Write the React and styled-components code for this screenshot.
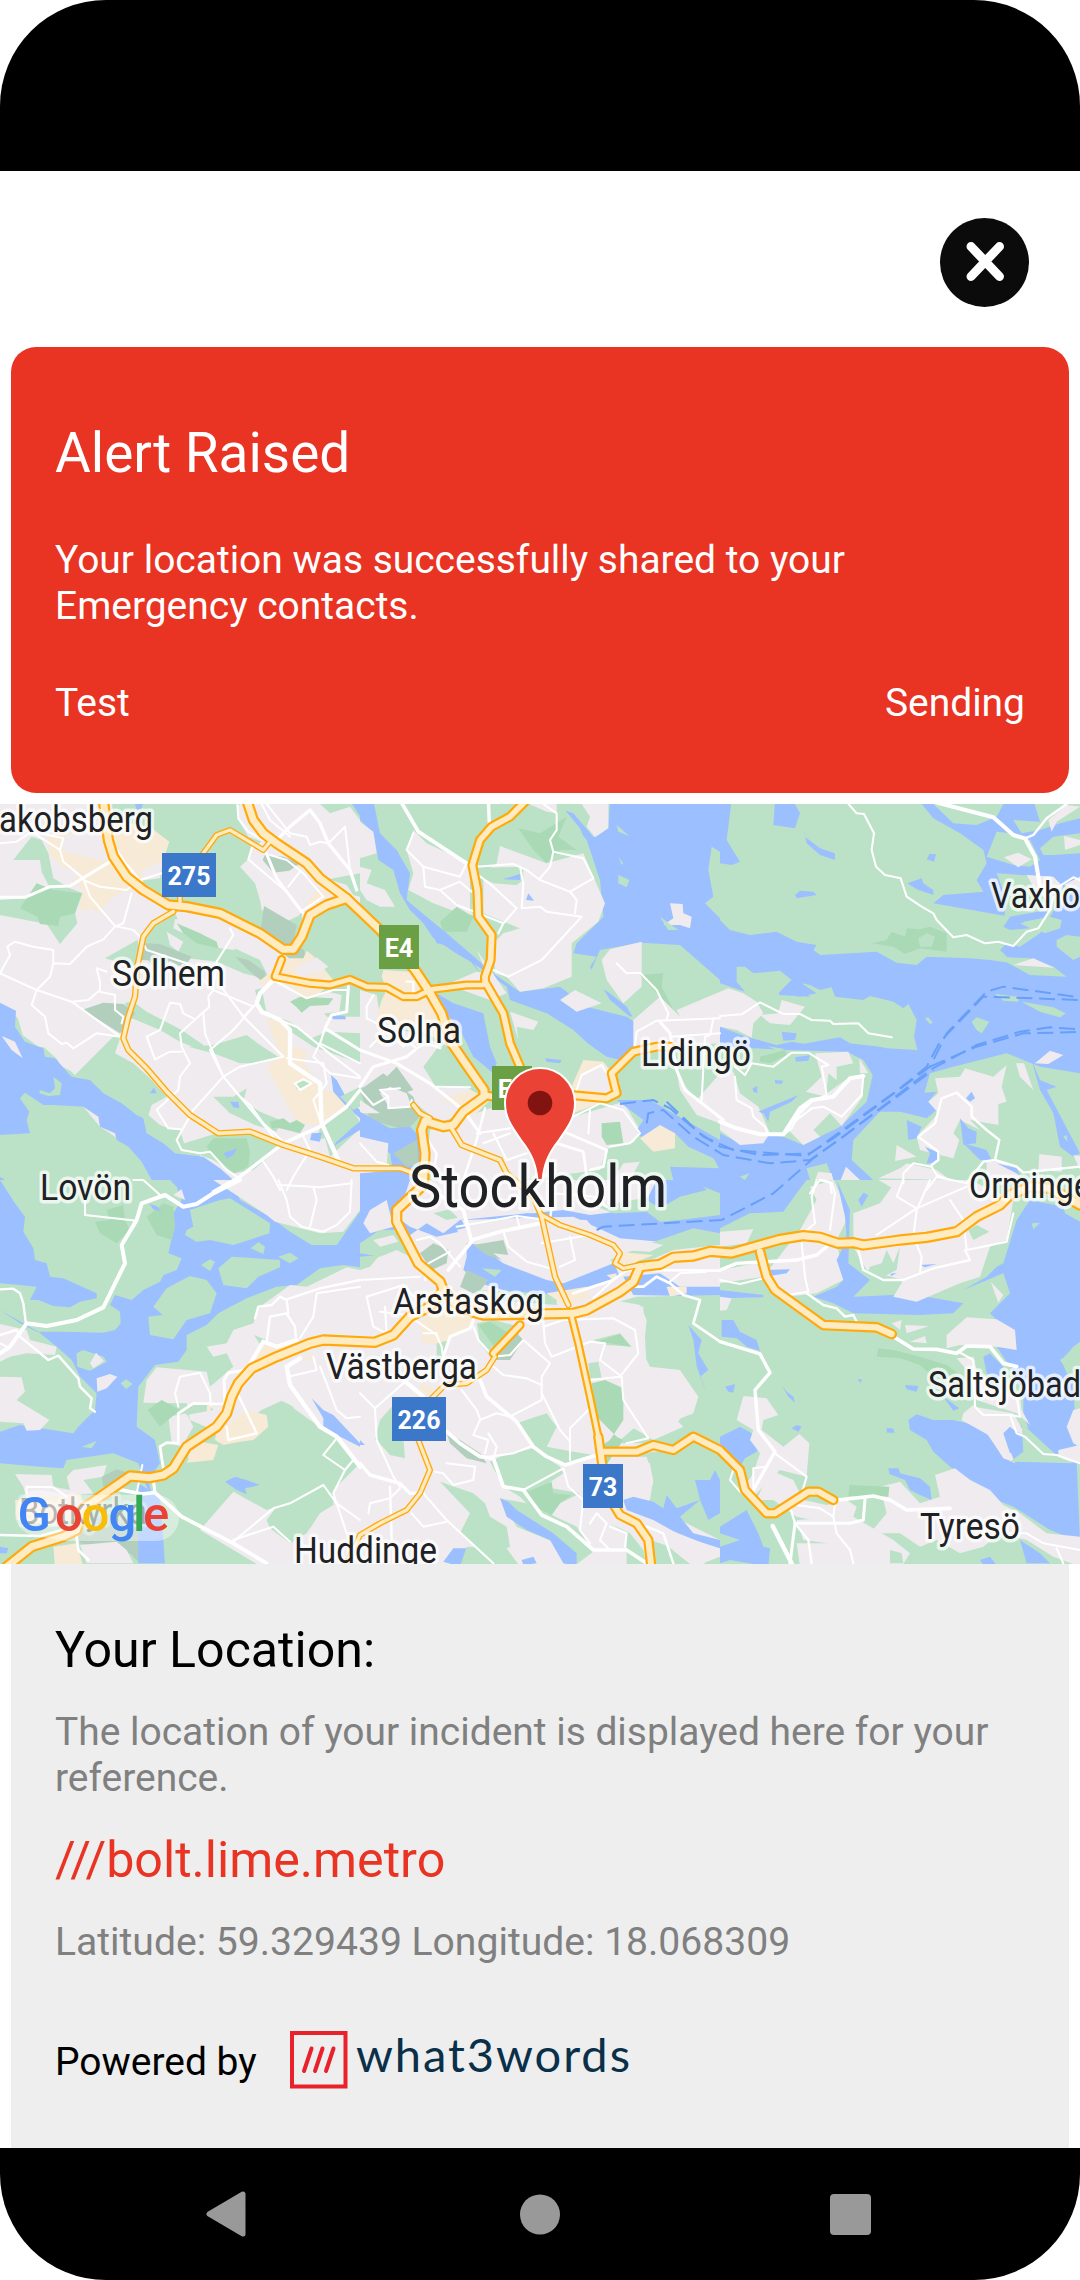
import React from 'react';
import styled, { createGlobalStyle } from 'styled-components';

const GlobalStyle = createGlobalStyle`
  * { box-sizing: border-box; }
  body { margin: 0; background: #fff; font-family: Roboto, "Noto Sans", sans-serif; }
`;

const Screen = styled.main`
  display: flex;
  flex-direction: column;
  width: 1080px;
  height: 2280px;
  overflow: hidden;
  border-radius: 106px;
  background: #fff;
`;
const StatusBar = styled.div`
  height: 171px;
  flex: none;
  background: #000;
`;
const Header = styled.header`
  display: flex;
  justify-content: flex-end;
  height: 176px;
  flex: none;
  padding: 47px 51px 0 0;
`;
const CloseButton = styled.button`
  width: 89px;
  height: 89px;
  padding: 0;
  border: 0;
  border-radius: 50%;
  background: #0b0b0b;
  svg { display: block; }
`;
const AlertCard = styled.section`
  height: 446px;
  flex: none;
  margin: 0 11px 11px;
  padding: 74px 44px 0;
  border-radius: 25px;
  background: #e93323;
  color: #fff;
`;
const Text = styled.p`
  margin: ${(p) => p.$top || 0}px 0 0;
  font-size: ${(p) => p.$size || 38.95}px;
  line-height: ${(p) => p.$line || 46}px;
  font-weight: 400;
  color: ${(p) => p.$color || 'inherit'};
`;
const StatusRow = styled.div`
  display: flex;
  justify-content: space-between;
  margin-top: 51px;
`;
const MapSvg = styled.svg`
  display: block;
  flex: none;
  width: 1080px;
  height: 760px;
`;
const MapLabel = styled.text`
  font: 400 ${(p) => p.$size || 36}px Roboto, sans-serif;
  fill: #202124;
  stroke: rgba(255, 255, 255, 0.72);
  stroke-width: 7px;
  stroke-linejoin: round;
  paint-order: stroke;
`;
const ShieldText = styled.text`
  font: 700 26px Roboto, sans-serif;
  fill: #fff;
  text-anchor: middle;
`;
const GoogleText = styled.text`
  font: 500 49px Roboto, sans-serif;
`;
const LocationPanel = styled.section`
  flex: 1;
  margin: 0 11px;
  padding: 57px 44px 0;
  background: #eee;
`;
const PoweredRow = styled.div`
  display: flex;
  align-items: flex-start;
  gap: 33px;
  margin-top: 66px;
`;
const BrandText = styled.text`
  font: 400 47px Lato, sans-serif;
  fill: #0a3049;
`;
const NavBar = styled.nav`
  display: flex;
  align-items: center;
  justify-content: space-between;
  height: 132px;
  flex: none;
  padding: 0 209px 0 206px;
  background: #000;
`;

const G = '#bbe2c6';
const W = '#9cc0ff';
const U = '#efebef';
const D = '#a9dab5';
const B = '#f7ead6';
const K = '#b2cebd';

/* Terrain sheets: three columns by two rows, 3 units per pixel. */
const SHEETS = [
  {
    x: 0, y: 0, base: U,
    shapes: [
      [G, '335,0 735,0 712,20 712,55 745,110 785,125 752,145 745,178 720,200 765,250 780,300 785,330 850,360 905,340 915,480 850,460 780,405 660,350 520,330 440,285 395,245 480,235 490,180 505,125 440,90 345,95'],
      [G, '0,345 0,300 75,295 150,265 125,215 120,180 40,180 75,135 95,110 125,120 145,160 160,235 210,265 248,280 225,340 232,370 180,432 140,372'],
      [D, '60,325 110,250 160,270 245,280 225,340 180,350 175,378 120,372 112,350'],
      [U, '735,190 800,225 835,260 880,330 900,345 850,370 800,320 780,300 772,250'],
      [U, '800,0 1080,0 1080,320 1000,280 970,200 880,120'],
      [G, '900,12 960,12 990,40 1050,20 1080,60 1080,0 900,0'],
      [W, '1048,0 1080,0 1080,48'],
      [W, '405,12 428,12 425,28 410,28'],
      [G, '985,238 1080,220 1080,290 1060,285 1040,255'],
      [K, '795,165 850,170 900,190 868,212 820,218 788,180'],
      [G, '910,365 960,335 1040,300 1080,345 1080,530 1000,545 935,540 910,500 880,460'],
      [K, '792,318 850,352 890,375 880,430 912,450 918,475 880,485 780,405'],
      [B, '345,60 455,85 508,125 490,180 425,212 430,245 380,272 340,290 320,310 290,345 285,328 235,330 250,270 215,240 245,225 185,200 150,165 140,110 180,95 300,90'],
      [U, '180,115 215,100 300,95 330,185 230,165 190,150'],
      [B, '955,265 980,255 990,285 940,312 910,320'],
      [G, '315,475 412,420 420,455 405,500'],
      [G, '420,425 480,350 520,330 535,360 650,420 715,450 780,480 810,540 730,520 650,485 530,470 470,510 430,465'],
      [U, '525,358 650,350 700,385 705,450 660,445 590,420 520,385'],
      [U, '500,395 550,425 535,455 510,435'],
      [K, '430,430 480,432 575,470 550,505 510,482 415,480'],
      [D, '530,370 600,400 650,425 655,445 590,430 550,400'],
      [K, '705,470 745,480 795,515 800,555 745,510'],
      [G, '860,480 1080,520 1080,650 980,650 940,590 830,535'],
      [B, '855,475 910,475 920,452 940,468 1000,540 940,600 900,590 850,535 795,560 775,545 820,510'],
      [U, '885,505 950,472 985,500 960,515 900,530'],
      [U, '870,570 930,600 985,575 1025,585 1018,635 980,640 900,635 850,600'],
      [D, '870,605 900,590 1000,595 985,615 930,618 905,638 890,622'],
      [G, '765,570 785,565 800,640 870,665 935,715 980,695 1080,700 1080,790 940,740 820,660 785,640'],
      [W, '990,645 1035,648 1038,658 1000,658'],
      [W, '945,750 970,775 965,770'],
      [G, '375,608 400,605 440,635 545,690 610,735 610,752 540,725 480,690 385,650'],
      [K, '245,630 310,608 370,612 405,640 380,680 360,700 265,640'],
      [G, '225,825 350,700 360,715 345,760 400,790 455,840 500,890 455,915 445,945 480,975 505,985 540,990 555,1040 600,1060 600,1075 490,1060 420,1005 390,945 300,875'],
      [G, '565,740 640,735 740,705 780,735 835,770 775,790 720,790 640,760'],
      [G, '640,890 700,890 740,865 730,905 780,935 840,960 830,995 765,975 690,940'],
      [B, '800,655 850,665 880,740 925,755 910,785 970,870 1010,880 1045,910 1040,930 940,978 895,965 870,930 800,800 820,780 840,770'],
      [G, '905,840 935,850 915,860 890,868 885,850'],
      [W, '993,825 1010,840 1040,895 1080,930 1080,955 1040,920 1000,875'],
      [G, '1020,890 1080,860 1080,920 1060,930'],
      [G, '505,1045 650,1000 750,1003 860,1035 830,1050 760,1110 700,1120 640,1080 560,1050'],
      [D, '640,1015 740,1015 750,1055 745,1100 705,1120 640,1070 620,1040'],
      [D, '810,965 850,955 870,970 890,960 915,975 900,1000 840,985 815,985'],
      [W, '670,1060 712,1045 700,1065 680,1075'],
      [W, '690,905 715,905 718,925 700,922'],
      [W, '450,880 462,862 470,880'],
      [G, '960,985 1050,920 1080,965 1075,990 990,1070 975,1015 950,1020'],
      [W, '935,1000 965,998 960,1025 930,1020'],
      [W, '1010,1025 1060,980 1080,965 1080,990 1030,1020 1000,1040'],
      [G, '40,640 135,745 225,825 300,880 200,860 100,780 45,710'],
      [U, '48,635 170,740 210,800 230,820 180,798 160,745 115,740 68,705'],
      [G, '0,1000 70,860 160,905 250,920 300,980 390,1040 425,1080 470,1140 0,1140'],
      [W, '0,608 48,632 45,680 75,725 130,745 135,770 165,775 215,830 270,840 310,880 365,910 410,945 430,955 440,1000 490,1030 525,1060 610,1070 660,1105 700,1140 455,1140 425,1085 385,1040 350,1020 345,1000 300,980 295,950 250,920 160,915 130,915 75,878 60,895 88,935 80,960 90,1000 0,1005'],
      [G, '120,870 150,880 165,865 160,830 185,850 180,885 145,888 118,880'],
      [U, '5,708 45,725 68,775 35,750'],
      [W, '0,1130 30,1150 0,1150'],
    ],
  },
  {
    x: 1080, y: 0, base: G,
    shapes: [
      [W, '0,0 40,0 60,100 110,150 150,220 140,300 200,350 260,400 330,460 400,520 480,575 600,560 680,620 800,650 830,670 900,740 780,780 740,770 640,700 560,640 450,600 440,560 340,490 270,450 230,430 190,370 150,330 120,280 100,210 55,180 40,100 0,60'],
      [W, '750,0 1080,0 1080,680 980,600 810,650 750,600 690,500 710,470 640,460 650,430 730,350 720,240 680,120 620,50 610,30 640,40 700,110 745,80'],
      [G, '140,0 480,0 600,12 660,85 690,160 700,250 730,310 715,360 640,430 610,540 480,575 400,520 340,380 170,110'],
      [U, '420,138 560,190 670,160 700,230 735,310 715,365 635,430 635,530 550,565 480,575 440,530 405,520 400,430 430,400 480,385 370,340 370,220 410,190'],
      [U, '140,150 160,90 200,130 330,190 330,330 340,345 300,340 220,310 145,270 160,220'],
      [U, '0,65 40,95 50,160 0,175'],
      [U, '0,200 35,210 20,250 75,270 105,320 60,320 20,300 0,270'],
      [G, '335,205 490,200 490,240 470,255 400,250 360,230'],
      [W, '428,238 480,222 480,240'], [W, '498,300 505,280 522,302'],
      [U, '480,0 590,0 590,40 560,35'],
      [D, '475,85 540,100 620,50 595,110 650,150 600,150 560,190 520,150'],
      [D, '240,365 290,320 340,350 320,395 250,395'],
      [U, '350,450 440,580 390,600 280,560 275,505 380,520'],
      [U, '665,12 745,12 745,85 705,112 680,80 690,50'],
      [G, '770,75 808,108 775,95'], [G, '775,225 808,240 800,262 775,250'], [G, '775,170 790,190 785,195'],
      [G, '1055,140 1080,155 1080,355 1035,310 1060,290 1045,210'],
      [U, '930,310 968,312 970,340 995,350 990,385 960,375 910,375 940,355'],
      [G, '900,350 955,390 925,390'],
      [G, '690,520 720,450 840,428 960,435 1080,540 1080,700 960,700 830,670 800,620 750,580 710,555'],
      [U, '725,480 750,448 845,425 845,560 790,610 740,540'],
      [D, '840,525 910,520 905,560 940,630 900,590'],
      [U, '820,660 900,590 940,630 960,650 950,630 1080,575 1080,970 1010,945 960,870 940,760 820,750 820,700'],
      [G, '935,740 1080,730 1080,820 1010,900 960,840 940,790'],
      [U, '600,600 645,570 725,610 650,635'],
      [G, '390,600 450,630 560,640 640,690 715,760 700,800 640,790 550,820 490,800 440,690'],
      [U, '450,635 535,665 520,690 470,680 475,720'],
      [G, '505,760 525,700 560,720 540,800'],
      [W, '555,775 605,780 600,790 560,785'],
      [G, '0,310 110,350 230,420 360,510 280,545 240,620 360,870 260,870 150,780 0,740'],
      [W, '195,350 230,430 300,445 360,520 330,470 260,400'],
      [W, '230,580 280,610 370,640 390,740 410,790 400,820 340,770 300,690 250,630'],
      [U, '0,570 50,585 60,650 130,690 240,730 300,850 350,880 330,930 240,970 130,880 0,860'],
      [B, '70,510 150,515 230,600 260,700 240,720 150,680 50,650 65,600 80,570 65,530'],
      [G, '235,740 285,760 370,860 230,865 190,800'],
      [K, '0,870 70,820 160,890 180,950 140,990 30,960'],
      [K, '80,830 110,800 160,870 130,880'],
      [U, '60,880 90,860 140,880 155,920 90,925'],
      [B, '240,900 330,870 390,900 320,970 270,970 320,920'],
      [U, '0,900 60,940 0,940'],
      [W, '0,935 90,985 150,980 180,1010 180,1100 100,1120 90,1060 0,1010'],
      [U, '0,1010 85,1030 80,1100 0,1130'],
      [U, '210,990 390,925 640,950 790,905 840,990 820,1030 740,1040 720,1110 480,1140 250,1140 200,1080'],
      [U, '300,980 380,935 640,1000 830,990 740,1050 710,1110 250,1120'],
      [B, '630,870 670,780 730,785 780,850 760,895 690,920 640,940'],
      [U, '650,865 665,820 720,795 740,800 745,880'],
      [D, '725,970 780,965 790,1030 740,1035 725,1010'],
      [G, '750,1040 860,1020 960,1050 1080,1100 1080,1140 710,1140'],
      [W, '770,900 870,900 1080,1020 1080,1110 990,1080 940,1060 930,1000 840,1010 830,990 850,960'],
      [G, '945,1000 985,1040 1060,1075 1080,1110 960,1100 900,1050'],
      [B, '840,1015 900,975 945,1000 945,1045 880,1055'],
      [K, '100,1060 170,1020 175,1095 140,1100'],
      [W, '0,1120 140,1110 170,1140 0,1140'],
      [W, '930,1100 1080,1105 1080,1140 940,1140'],
      [U, '790,1090 840,1085 810,1140 760,1140'],
    ],
  },
  {
    x: 2160, y: 0, base: W,
    shapes: [
      [G, '35,0 165,0 160,75 225,85 240,40 225,12 605,12 640,55 720,100 790,150 800,190 770,240 790,275 670,285 640,310 870,350 850,380 910,395 870,420 840,450 880,490 810,480 750,475 620,470 590,495 530,488 470,455 300,465 280,450 290,435 230,425 170,395 90,405 30,390 0,360 0,190 35,195 60,185 20,120'],
      [W, '250,82 255,110 300,145 345,160 345,180 300,165 260,130'],
      [W, '225,285 240,272 280,275 290,285 230,295'], [W, '620,178 628,162 648,162 642,185'],
      [W, '562,250 605,235 610,250 640,270 640,285 590,268'],
      [D, '455,430 500,420 515,395 555,410 560,385 600,388 630,380 680,400 680,455 640,450 600,445 555,462 520,440'],
      [G, '595,415 620,400 645,410 635,440 600,440'],
      [G, '640,12 850,12 830,50 770,75 700,70'],
      [G, '800,170 830,95 870,100 930,120 960,180 930,200 880,195'],
      [G, '960,145 1000,110 1080,100 1080,160 1000,165 970,165'],
      [G, '940,0 1080,0 1080,55 1020,70 960,90 905,100 880,60 960,65'],
      [U, '852,172 895,158 935,178 895,202'], [U, '985,60 1040,15 1080,20 1010,65 995,95'], [U, '1032,108 1080,120 1080,135 1035,150'],
      [G, '830,220 900,225 1000,230 1030,265 1080,230 1080,260 1020,300 960,400 900,440 820,420 850,370 860,300'],
      [U, '920,225 1000,230 1030,260 980,300 940,260'], [U, '1030,255 1080,230 1080,270'],
      [W, '850,380 870,350 985,330 970,355 900,370 930,385 870,390'],
      [G, '910,365 990,350 1025,360 1020,385 975,400 930,380'],
      [G, '1010,420 1040,405 1080,410 1080,470 1060,480 1010,440'],
      [G, '830,470 930,475 1000,500 1040,530 930,525'],
      [U, '880,495 940,475 1003,503'],
      [G, '50,500 75,500 100,520 180,512 215,540 175,580 240,590 290,580 245,550 270,555 300,570 335,562 345,590 430,600 450,588 520,605 550,625 565,612 590,660 582,710 592,750 500,745 480,740 390,730 360,712 200,740 180,755 100,720 0,690 0,550 75,575 50,545'],
      [W, '215,540 270,590 175,585'],
      [U, '0,575 25,565 70,580 110,605 130,640 100,670 95,713 50,690 0,680'], [U, '120,645 175,640 185,600 255,620 210,675 150,670'],
      [W, '185,695 230,700 225,720 190,722'], [G, '615,655 625,652 638,668 630,672'],
      [G, '755,665 770,652 808,665 785,700 770,690'], [G, '825,582 895,590 895,605 850,602'], [G, '905,605 1000,622 1037,640 1020,652 960,635'],
      [W, '0,680 80,710 170,735 215,725 330,745 290,760 180,745 60,725 0,700'],
      [G, '0,740 200,750 380,755 430,780 458,825 440,905 360,980 250,1035 190,1010 140,1005 60,1030 0,1000'],
      [U, '0,800 40,815 60,880 115,920 150,1000 130,1030 60,1035 0,990'],
      [D, '120,770 195,750 200,765 150,790 120,785'], [W, '225,772 270,766 265,782 228,785'],
      [W, '98,865 112,858 112,880 100,875'], [W, '165,840 190,842 185,852 165,850'],
      [W, '115,935 150,920 235,885 215,905 150,935 145,965 130,940'],
      [U, '285,760 385,755 400,790 350,800 350,840 325,820 318,890 258,875 305,830'],
      [U, '418,775 445,820 420,820'],
      [U, '200,985 260,905 300,895 390,830 430,825 428,890 365,978 330,940 280,990 300,1010 250,1035'],
      [G, '400,1020 480,935 585,935 610,890 630,820 700,800 860,760 960,800 1080,820 1080,1140 460,1140 395,1080'],
      [W, '595,880 650,875 625,905 650,930 620,955 520,930 590,910'],
      [U, '645,835 720,830 735,805 820,830 860,795 845,860 860,905 835,912 835,975 750,960 780,990 720,960 700,1000 718,1020 700,1075 600,1050 590,1010 655,940 625,905 655,880'],
      [U, '530,1035 590,1070 525,1083'], [U, '888,790 912,790 940,870 900,830'],
      [U, '945,790 990,752 1030,765 985,792'],
      [W, '935,780 960,840 1010,860 980,870 1080,1060 1060,1070 1020,1040 1000,940 960,870'],
      [W, '720,955 745,985 770,995 768,1030 730,1035'], [W, '738,895 755,875 765,895 750,905'],
      [G, '1030,1010 1040,1005 1042,1025'],
      [W, '560,960 605,980 590,1015 565,1020'],
      [W, '615,1040 660,1060 650,1090 620,1090 630,1060'],
      [W, '730,1030 800,1050 815,1080 780,1080'],
      [U, '475,1135 540,1105 560,1090 650,1110 690,1140'],
      [U, '800,1085 850,1085 900,1130 880,1140 800,1140'], [U, '958,1062 1025,1070 1025,1115 955,1110'],
      [W, '830,1090 890,1105 900,1125'],
      [G, '270,1140 260,1105 320,1090 340,1140'], [U, '285,1140 295,1115 335,1120 340,1140'], [U, '378,1100 420,1140 362,1140'],
      [G, '60,1130 88,1120 75,1140'], [U, '1060,1065 1080,1068 1080,1110'],
    ],
  },
  {
    x: 0, y: 1140, base: G,
    shapes: [
      [W, '0,0 45,70 75,110 70,155 100,205 105,240 140,250 150,290 190,295 290,340 290,355 240,365 210,382 160,378 115,360 90,360 110,320 60,315 0,310'],
      [W, '0,390 60,430 110,455 200,455 310,458 345,450 362,430 360,395 330,375 345,345 395,360 430,330 480,305 490,285 530,270 545,235 505,220 520,150 520,100 545,60 530,20 510,0 700,0 720,60 810,110 870,155 935,195 1010,195 1080,95 1080,262 1030,255 960,265 890,315 830,320 740,355 655,400 620,435 560,465 560,510 535,545 465,555 415,620 410,740 465,780 480,850 445,900 460,960 430,900 415,850 340,820 200,840 190,865 120,860 0,850 0,755 60,735 220,760 235,740 285,690 290,640 240,590 215,540 170,500 115,455'],
      [U, '520,45 545,28 555,60'],
      [G, '560,150 580,140 570,90 660,60 690,55 810,130 808,160 700,195 630,180 590,185 555,165'],
      [G, '752,205 775,187 795,200 790,222'], [G, '835,230 870,218 895,235 870,250'], [G, '603,255 630,238 645,245 630,273'],
      [G, '655,265 695,230 840,240 840,262 775,290 740,325 670,315'],
      [G, '460,380 500,325 570,288 620,300 650,340 630,400 560,420 520,478 450,465 445,410 488,405'],
      [D, '440,110 490,70 520,80 525,140 515,180 470,165'], [D, '285,125 330,120 320,90 370,75 375,120 390,150 350,190 300,160'],
      [W, '448,72 470,78 485,95 460,88'],
      [U, '640,0 1080,0 1080,90 1030,155 960,160 825,125 800,105'],
      [U, '620,500 680,490 700,450 760,430 780,380 870,315 920,320 1040,262 1080,270 1080,860 1020,780 930,720 860,670 790,690 770,740 720,790 680,740 640,750 570,720 560,670 430,668 440,600 470,562 620,575 630,620 700,560 680,520 640,530'],
      [U, '505,710 560,700 580,740 545,800 515,790'],
      [U, '0,432 80,450 90,480 170,500 165,525 80,520 30,530 0,545'], [U, '0,590 65,592 75,635 50,660 148,720 120,750 80,752 70,730 0,725'],
      [G, '230,520 250,510 310,530 320,545 270,572 232,560'], [U, '288,518 312,543 280,565 270,550'],
      [W, '232,570 268,572 262,590 240,588'],
      [U, '290,595 330,582 352,590 320,625 292,635'], [G, '362,610 378,598 398,612 378,627'],
      [G, '245,800 290,783 275,805'],
      [D, '443,690 485,660 540,690 480,740'], [G, '540,680 620,668 640,690 560,705'],
      [G, '530,805 680,810 730,730 785,690 845,662 880,680 880,730 948,790 910,840 972,875 900,905 930,940 985,930 1000,965 960,1000 930,1000 930,1060 810,1040 800,1010 830,980 770,920 800,990 770,995 700,930 640,1045 560,1060 510,980 480,905'],
      [G, '762,465 800,480 785,500'],
      [B, '760,540 790,497 880,485 900,500 860,530 800,555'], [B, '905,540 935,520 940,530 920,545'],
      [B, '685,735 740,690 800,705 805,740 760,780 720,785 670,795 645,780 650,750'], [B, '565,840 565,805 600,785 655,795 640,840 560,848'],
      [B, '622,670 635,675 630,695 620,692'],
      [W, '675,905 705,890 740,900 780,915 735,925 740,943 710,930'],
      [W, '935,655 970,690 1000,705 1080,790 1080,800 970,745 970,715'],
      [U, '45,882 155,885 160,920 210,930 200,890 220,870 320,855 310,890 250,900 280,940 80,960 70,920'],
      [K, '305,890 350,868 390,880 330,930 310,920'], [B, '45,960 240,940 260,1000 170,1040 50,1020'],
      [B, '160,1100 230,1090 250,1160 165,1160'], [K, '235,1070 310,1000 430,1020 420,1150 390,1120 240,1090'],
      [U, '240,1095 350,1085 380,1110 400,1150 260,1150'],
      [W, '415,910 480,950 495,1150 415,1150'], [W, '0,1100 25,1105 20,1120 0,1120'],
      [U, '600,1050 700,935 800,990 830,980 800,1020 810,1045 870,1090 920,1060 960,1000 1000,975 1000,930 1080,850 1080,1170 800,1170'],
      [G, '60,1110 100,1110 150,1160 30,1160'],
    ],
  },
  {
    x: 1080, y: 1140, base: U,
    shapes: [
      [W, '0,0 150,0 130,60 95,100 150,140 230,170 320,150 300,110 380,95 520,100 610,90 690,105 890,80 870,50 920,0 1080,0 1080,165 1000,175 900,185 780,175 640,110 300,120 250,160 200,130 130,180 0,260'],
      [U, '10,130 30,90 80,60 100,140 30,160'], [G, '0,190 60,150 130,150 170,240 110,210 60,230 0,220'],
      [U, '40,180 100,165 115,185 60,200'], [G, '0,230 60,225 30,260 0,270'],
      [G, '220,100 300,80 310,110 260,120'], [G, '710,80 870,50 940,0 980,0 1080,40 1080,105 960,120 900,125 860,95 760,100'],
      [W, '890,0 1010,0 1040,30 960,50 900,85 860,60'],
      [U, '200,20 480,60 500,100 300,120 240,60'],
      [K, '180,220 220,190 265,210 260,250 215,270'],
      [W, '320,170 430,250 560,300 610,310 760,245 780,290 610,345 480,345 360,310 310,270 320,230'],
      [U, '290,150 430,115 680,120 740,190 760,250 610,310 560,270 480,260 400,200 320,190'],
      [K, '340,195 430,180 445,225 400,220 425,240 380,225'], [G, '365,265 425,270 405,290'],
      [K, '320,270 385,300 350,345 300,320'], [G, '350,330 480,335 590,345 590,375 400,360'],
      [G, '750,240 870,190 1000,145 1080,160 1080,195 940,210 850,250 780,260'],
      [B, '770,215 880,225 820,250 770,260'], [B, '560,340 680,320 690,350 620,380'], [B, '740,285 770,280 765,305'],
      [U, '780,210 840,180 910,195 870,215'],
      [B, '180,430 240,380 340,370 340,430 250,495 190,490'], [B, '370,335 400,325 405,345 380,350'],
      [G, '350,430 400,420 480,440 470,500 430,535 400,540 360,490'], [D, '355,435 390,425 465,470 410,510'],
      [K, '395,540 470,460 490,480 450,540'],
      [W, '790,290 900,280 960,320 1080,320 1080,350 820,345'], [B, '920,320 980,320 980,340 930,350'],
      [G, '760,370 830,350 1080,345 1080,850 980,820 860,790 770,790 850,720 950,730 1015,650 930,575 860,565 850,380'],
      [U, '760,360 840,375 860,420 850,520 870,560 960,570 1015,650 1000,700 950,720 970,740 880,780 780,720 830,550 740,460'],
      [G, '700,480 780,460 815,500 740,495'], [D, '710,485 780,462 812,500 750,490'],
      [G, '685,550 715,545 725,595 690,595'], [D, '695,610 735,600 790,625 790,720 750,780 720,800 735,860 790,780 770,770 710,710'],
      [W, '985,435 1025,480 1015,520 1045,570 1020,590 1045,650 1010,560 1000,480'],
      [B, '155,655 190,610 240,640 235,665'], [G, '45,780 60,720 95,680 100,810 135,835'],
      [G, '50,780 130,770 135,835 90,825'], [G, '230,490 270,480 250,530 230,560'],
      [G, '470,730 560,700 590,740 560,800 640,815 700,825 650,850 600,855 530,815'],
      [K, '260,760 300,780 360,820 380,850 320,835 270,790'],
      [G, '390,845 420,830 520,805 600,860 610,880 550,920 660,940 600,970 575,1005 640,1060 600,1070 480,950 430,920'],
      [D, '500,935 575,905 580,940 635,945 600,970 575,1005 540,1010'],
      [G, '240,905 340,940 375,970 390,1010 440,1040 450,1100 380,1130 300,1060 330,1000'],
      [G, '420,955 500,970 650,1040 700,1115 640,1160 590,1090 470,1040'],
      [W, '420,955 445,965 470,990 580,1060 650,1120 650,1160 610,1150 570,1080 500,1050 440,1010'],
      [W, '250,1145 280,1105 330,1105 300,1160'], [G, '320,1100 440,1105 480,1160 300,1160'], [W, '485,1140 520,1130 530,1150 490,1155'],
      [G, '770,830 860,830 880,900 870,960 820,980 960,1020 1080,1080 1080,790'],
      [U, '750,840 830,830 870,850 880,910 840,955 790,940'],
      [W, '790,960 820,950 880,965 910,985 920,945 950,985 1020,960 960,1010 1000,1060 1080,1080 1080,1105 970,1070 880,1020 800,990'],
      [W, '1005,900 1050,900 1065,870 1080,900 1080,1000 1045,1020 1020,960'],
      [G, '750,1030 810,1060 850,1110 860,1160 800,1160 800,1060'], [G, '870,1080 960,1110 1000,1160 870,1160'],
      [U, '880,1030 1080,1110 1080,1160 1000,1160 900,1080'], [G, '1030,1150 1080,1130 1080,1160'],
      [W, '0,780 15,795 0,795'],
    ],
  },
  {
    x: 2160, y: 1140, base: G,
    shapes: [
      [W, '0,0 260,0 230,40 190,95 90,100 0,145'],
      [U, '0,155 100,148 80,190 0,200'], [U, '240,150 290,60 270,20 340,0 390,100 350,180 370,300 290,340 200,350 130,300 110,250 0,270 0,310 130,290'],
      [W, '350,0 390,90 385,250 450,300 400,350 520,345 620,350 730,370 700,400 600,405 400,400 340,370 280,350 350,320 370,300 350,240 380,180 375,110'],
      [U, '400,100 480,70 530,0 750,0 880,60 860,180 810,200 780,290 720,310 590,365 520,350 550,300 440,270 400,200'],
      [U, '475,0 530,0 530,30 510,20'], [W, '415,60 430,38 445,45 425,80'],
      [G, '450,260 485,250 500,210 520,250 540,200 530,270 480,295 440,290'],
      [G, '745,150 770,135 808,155 760,180'], [W, '600,255 650,252 615,262'], [W, '510,282 530,278 515,288'],
      [W, '130,270 210,268 200,280 135,290'], [W, '0,330 130,345 130,352 0,355'],
      [W, '890,120 930,60 1030,80 1080,50 1080,500 1020,540 1060,600 1080,1085 990,1050 880,980 830,960 800,930 720,880 690,860 640,815 620,780 570,750 565,720 590,703 640,720 700,720 790,740 850,720 925,745 910,700 910,640 870,560 830,500 800,440 830,420 810,400 870,340 850,280 730,330 800,290 830,260 850,250'],
      [G, '1030,80 1080,75 1080,125 1035,100'], [G, '935,130 960,128 940,148'],
      [U, '812,305 850,345 835,368'], [U, '680,465 740,412 830,418 885,450 890,510 830,500 720,495 680,505'],
      [U, '555,435 628,438 560,460'], [U, '515,430 545,420 540,450'], [U, '570,485 615,468 620,490'],
      [D, '475,505 520,510 600,530 680,555 715,580 700,600 640,590 600,555 540,535 470,530'],
      [U, '710,535 760,530 770,570 820,620 900,650 905,690 930,735 890,700 770,660 740,570'],
      [W, '790,530 810,520 850,560 830,600 800,580'], [U, '730,700 760,675 800,700 870,705 880,740 870,760 900,770 880,800 830,760 885,850 850,830 800,760 725,720'],
      [U, '725,720 760,680 880,700 920,770 880,750 850,760 885,848 850,835 805,765'],
      [G, '1025,540 1060,500 1080,485 1080,600 1040,580'], [W, '850,760 870,740 905,770 905,800 870,820'],
      [U, '1040,740 1060,690 1080,685 1080,800 1060,790'], [U, '1015,810 1080,795 1080,850 1015,840'],
      [G, '905,730 970,790 1015,830 1060,850 870,845 910,815'],
      [U, '645,885 705,865 750,900 810,930 850,975 900,1000 940,1030 980,1060 1080,1070 1080,1160 1000,1130 920,1080 840,1060 790,1100 720,1120 650,1080 600,1100 540,1060 450,1060 500,1000 480,920 540,905 600,970 660,950'],
      [D, '388,915 508,920 505,950 385,948'], [W, '505,865 535,865 540,880 600,895 630,920 635,960 600,945 570,930 555,900 508,882'],
      [W, '500,745 518,745 525,758 500,758'], [W, '215,745 230,735 245,740 235,755'], [W, '185,615 200,635 220,650 225,668 205,650'],
      [W, '15,620 45,612 40,638 25,635'], [W, '412,598 425,598 423,610'], [W, '555,615 595,618 590,635 560,628'], [W, '670,650 718,685 700,692'],
      [W, '5,420 40,420 60,455 110,480 120,512 80,500 50,475 5,470'], [U, '0,350 35,355 20,390 0,392'],
      [W, '0,770 60,740 95,760 120,790 110,815 75,835 55,870 0,820'],
      [U, '50,720 70,648 140,655 175,705 130,720 125,750 190,800 238,762 268,790 260,890 180,870 90,960 60,940 100,880 120,820 90,780 100,750'],
      [U, '110,960 150,870 220,900 250,960 320,975 380,960 410,980 400,1010 320,1030 230,1010 160,960'],
      [G, '215,1010 260,1030 310,1080 420,1120 440,1160 230,1160'], [U, '230,1020 400,1010 520,1080 570,1120 545,1160 400,1160 320,1090 250,1080'],
      [G, '510,1110 545,1120 550,1150 510,1150'],
      [W, '0,1040 80,990 115,1060 130,1100 150,1105 145,1160 30,1140 0,1150'], [G, '0,1060 60,1080 0,1100'],
      [W, '900,1080 960,1120 990,1150 920,1150'], [W, '780,1140 810,1130 830,1155 790,1155'], [U, '230,1090 330,1090 400,1160 240,1160'],
    ],
  },
];

/* Streets, as [column, row, width, points]. */
const STREETS = [
  [0, 0, 8, '0,292 75,292 150,260 210,258 330,185'],
  [0, 0, 5, '0,130 50,125 95,95 180,150 190,185 250,235 270,290 345,378 400,390 420,410 440,450 560,490 640,570 760,620 700,690 630,750 670,830 820,1010'],
  [0, 0, 5, '180,150 190,115 120,100 95,95'], [0, 0, 5, '250,240 300,260 380,270 420,240 490,218'],
  [0, 0, 5, '395,280 370,370 345,380 310,418 260,440 210,492 160,490 160,450 100,440 45,425 22,440 30,465 0,520 110,570 215,605 360,710 290,700 220,745 200,728 185,732 145,700 135,650 95,615 110,570 150,530 160,490'],
  [0, 0, 5, '215,605 265,600 300,570 300,545 290,505 320,515'], [0, 0, 5, '300,575 345,585 345,630 370,650 365,670'],
  [0, 0, 7, '350,150 375,190 390,205 420,245'],
  [0, 0, 5, '690,385 700,405 650,485 640,570 625,590 628,620 540,700 545,740 570,790 540,830 535,870 470,930 505,985 540,988'],
  [0, 0, 5, '545,755 510,755 465,778 440,710 480,690 510,608 540,612 550,640 580,655'], [0, 0, 5, '610,640 615,700 670,830 580,930 530,1020 545,1050 600,1060 630,1055 680,1110 710,1130'],
  [0, 0, 5, '660,555 730,650 850,770 720,800 670,830'], [0, 0, 5, '730,650 770,610'],
  [0, 0, 5, '670,830 720,890 750,915 790,970 850,1025'],
  [0, 0, 5, '760,130 745,178 860,275 910,340'], [0, 0, 8, '795,150 830,235 860,275 905,335'], [0, 0, 5, '810,165 860,180 910,220 970,290 910,330'], [0, 0, 5, '900,215 865,260'],
  [0, 0, 5, '712,10 715,55 745,95 790,120'], [0, 0, 9, '830,120 870,80 930,30 960,70 985,130 1050,210 1070,270'],
  [0, 0, 5, '800,12 870,100 920,110 930,135 960,125 985,130 1035,80 1050,210'], [0, 0, 5, '785,12 810,60 870,110'],
  [0, 0, 12, '820,540 780,580 770,610 785,635 840,660 870,690 870,790 960,850 965,970 1015,1080'],
  [0, 0, 5, '820,540 920,595 1000,570 1045,570'], [0, 0, 8, '1045,560 1040,635 995,645 975,685 1080,750'], [0, 0, 5, '975,685 960,730 1080,790'],
  [0, 0, 5, '840,660 890,680 1000,770 1080,830'], [0, 0, 5, '860,775 970,790 980,850 940,900 960,960'], [0, 0, 5, '960,730 940,770 990,820 1080,835'],
  [0, 0, 9, '640,1175 720,1130 850,1030 960,980 1040,920 1080,870'], [0, 0, 5, '910,1010 930,1050 880,1130 860,1170'], [0, 0, 5, '790,1085 820,1130 840,1170'], [0, 0, 5, '885,850 900,870 935,850 910,838 885,850'],
  [1, 0, 10, '120,0 175,95 320,190'], [1, 0, 9, '385,0 388,70'], [1, 0, 5, '160,100 140,150 190,200 195,260 240,270 300,245 335,275'],
  [1, 0, 5, '190,200 300,230 320,190'], [1, 0, 5, '240,270 290,315 330,330 430,370 470,325 400,260 355,225'], [1, 0, 5, '350,200 460,192 500,210 540,240 630,275 700,235 670,175 580,155 570,120 590,90 590,40 550,12'],
  [1, 0, 5, '480,200 490,250 485,325 540,320 560,335 665,350 545,480 445,530 400,510'], [1, 0, 5, '540,235 570,200 580,155'], [1, 0, 5, '430,370 415,400'], [1, 0, 5, '630,275 650,300 645,340'],
  [1, 0, 5, '770,490 800,520 840,518 890,570 925,640 920,660'], [1, 0, 5, '825,740 830,695 890,662 1080,655'], [1, 0, 8, '900,665 930,700 950,810 975,870 1090,960'], [1, 0, 5, '1060,655 1050,705 1035,710 1025,900'], [1, 0, 5, '930,710 1080,700'],
  [1, 0, 5, '40,585 20,620 20,655 110,700 170,745 200,730 240,745'], [1, 0, 8, '0,860 40,800 140,770 165,750'], [1, 0, 8, '0,750 110,790 210,850 310,930 360,1000'],
  [1, 0, 5, '30,740 80,690 130,740 160,690'], [1, 0, 5, '0,870 40,915 85,890 85,925 150,920 155,900'], [1, 0, 5, '85,890 60,870 120,865'], [1, 0, 6, '140,545 160,545 160,590'],
  [1, 0, 5, '230,860 330,862'], [1, 0, 6, '375,925 350,1020 310,1140'], [1, 0, 5, '350,1000 450,985'], [1, 0, 5, '450,1000 370,1030'], [1, 0, 5, '400,1000 440,1080 500,1060'],
  [1, 0, 7, '600,990 740,1050 730,1100 690,1110'], [1, 0, 7, '590,1030 670,1055 680,1130'], [1, 0, 5, '640,950 720,910 790,930 840,1000 810,1030 750,1040'], [1, 0, 5, '690,930 685,1000'], [1, 0, 5, '650,870 665,825 725,795 740,820'], [1, 0, 5, '0,1030 50,1085 85,1095'], [1, 0, 6, '190,1000 230,1060 220,1130'],
  [2, 0, 5, '375,0 410,40 432,42 462,100 455,150 468,200 495,225 542,235 560,290 605,320 640,340 650,360 700,412 740,405 795,430 835,425 880,438 920,395 955,385 990,330 1000,290'], [2, 0, 11, '640,5 820,52 880,105 915,115 945,170 960,260'], [2, 0, 6, '1040,12 980,55 940,105 915,115'], [2, 0, 5, '1000,270 1060,232 1080,240'],
  [2, 0, 5, '0,648 65,643 120,607 190,642 240,642 275,660 330,662 340,672 415,670 445,700 515,712'],
  [2, 0, 5, '45,800 75,825 95,790 160,800 215,758 265,758 325,795 305,800 320,885 275,905 240,940 215,985 190,1005'], [2, 0, 11, '0,965 50,985 120,1003 190,1003 240,925 275,900 340,890 390,835 430,828'], [2, 0, 5, '430,828 425,885 365,950 310,920 275,925 230,960'], [2, 0, 5, '45,830 50,900 95,925 100,950 135,980 145,1005'],
  [2, 0, 5, '690,1140 650,1125 635,1100 580,1090 550,1120 550,1150'], [2, 0, 5, '620,1170 650,1130 740,1150'], [2, 0, 6, '635,1095 655,1080 655,1055 595,1010 645,970 665,895 710,878 755,920 755,950 800,990 838,1020 825,1080 890,1100 910,1118 980,1110 1080,1100'], [2, 0, 6, '825,1080 790,1085 740,1150'],
  [2, 0, 5, '270,1180 300,1140 330,1145 335,1180'],
  [0, 1, 5, '400,0 430,0 480,45'], [0, 1, 5, '255,60 255,105 410,122'], [0, 1, 11, '0,520 30,500 80,430 140,438 230,420 310,382 375,250 365,195 410,120 425,70 495,45 550,80 590,72 640,40 720,0'], [0, 1, 6, '0,328 40,326 60,340 70,370 78,432'], [0, 1, 6, '0,465 50,450 60,470 145,540 175,527 235,595 240,620 275,655 270,685 285,695'], [0, 1, 5, '0,490 20,500'],
  [0, 1, 5, '835,0 860,60 870,110 905,140 970,155 1010,135 1050,95 1055,0'], [0, 1, 5, '840,15 900,18 960,22 1055,10'], [0, 1, 5, '940,20 950,60 930,140'],
  [0, 1, 7, '490,865 480,800 500,788 535,790 535,700 580,670 680,672'], [0, 1, 5, '535,680 525,640 540,590 600,578 630,640 632,675'],
  [0, 1, 8, '740,570 685,578 672,600 675,665'], [0, 1, 11, '745,560 790,485 830,500 890,480'], [0, 1, 6, '715,645 770,760 685,780 680,740'], [0, 1, 6, '800,485 810,410 860,400 885,440 888,480'], [0, 1, 6, '765,415 775,380 815,375 840,350 860,360 865,400'], [0, 1, 6, '860,358 960,325 1080,300'], [0, 1, 5, '900,475 940,410 950,340 1080,320'],
  [0, 1, 12, '900,535 860,560 870,615 960,740 1010,770 1080,860'], [0, 1, 5, '865,590 950,570 940,530'], [0, 1, 5, '960,560 980,610 1010,690 1040,715 1080,710'], [0, 1, 5, '1010,775 970,825 1035,870 1000,940 1040,1060'], [0, 1, 5, '700,1085 820,985 870,970 970,915 1010,970 1080,1020'], [0, 1, 5, '1035,870 1060,840'],
  [0, 1, 5, '700,1080 820,1040 870,1085'], [0, 1, 10, '340,925 425,942 465,938 545,1010 700,1090 800,1150'], [0, 1, 8, '460,900 465,938'], [0, 1, 7, '0,1065 120,1068 225,1040 235,1110 265,1140'], [0, 1, 5, '410,940 420,890 427,855'], [0, 1, 5, '80,940 80,920 160,922 200,950'],
  [1, 1, 5, '290,140 470,108 560,120'], [1, 1, 10, '230,40 310,90 335,185 265,270'], [1, 1, 10, '335,180 420,155 540,130'], [1, 1, 5, '430,155 445,200 500,245 570,265'], [1, 1, 5, '545,190 630,175 690,165'], [1, 1, 5, '630,170 645,240 600,260'], [1, 1, 5, '170,180 210,170 240,190 300,260'], [1, 1, 5, '195,300 205,250 270,215'], [1, 1, 5, '470,110 480,145'],
  [1, 1, 6, '570,120 580,40 700,50 740,80'], [1, 1, 7, '640,340 700,320 760,300 800,270 1080,272'], [1, 1, 7, '800,320 850,320 890,290 930,310 970,345 1020,360 1000,430 1080,485'], [1, 1, 5, '930,305 960,280 1040,275'], [1, 1, 5, '700,355 770,290'],
  [1, 1, 5, '0,300 180,290'], [1, 1, 5, '20,350 130,315 180,370'], [1, 1, 5, '20,350 40,440 80,460 75,380'], [1, 1, 5, '60,395 140,405'], [1, 1, 5, '150,410 230,465 245,500 250,540'], [1, 1, 8, '250,530 270,470 330,445 340,420'], [1, 1, 5, '190,460 230,460'],
  [1, 1, 5, '340,440 355,480 400,530 450,525 490,480 570,550 545,590 545,660 450,710 410,700 360,720 340,765 385,780 375,820'], [1, 1, 5, '400,560 430,585 500,595 545,615'], [1, 1, 5, '550,425 555,490 575,530 690,485'], [1, 1, 5, '550,440 610,420 760,415 825,450 835,520 780,590 690,600'], [1, 1, 5, '690,485 735,490 720,540 785,590 790,660 865,775 800,790'],
  [1, 1, 12, '130,600 190,650'], [1, 1, 10, '360,600 380,650 470,725 520,800 560,830 615,855 710,825'], [1, 1, 10, '260,755 300,790 360,830 400,835 430,920 490,930 545,1005 620,1040 700,1110 800,1110 860,1150'], [1, 1, 5, '630,840 630,745 690,685'], [1, 1, 5, '545,640 600,750 630,785'], [1, 1, 5, '490,930 610,865 625,920 670,960 660,1050 690,1090'],
  [1, 1, 5, '0,640 45,685 50,780 100,890 120,920'], [1, 1, 9, '0,850 30,885 120,910 150,940 190,940'], [1, 1, 5, '45,685 130,610'], [1, 1, 5, '25,1000 30,970 90,955 120,925'], [1, 1, 5, '190,940 260,1020 400,1150'], [1, 1, 5, '155,1000 190,1040 260,1025'], [1, 1, 5, '225,875 250,880 280,915 340,900 345,860 260,850'], [1, 1, 5, '305,630 350,690 360,715'], [1, 1, 5, '385,830 460,820 510,800'],
  [1, 1, 5, '690,1030 710,1000 740,1030 720,1080 750,1110'], [1, 1, 5, '750,1040 800,1060 795,1100'], [1, 1, 6, '860,1040 910,1060 940,1150'], [1, 1, 6, '90,920 95,1080'], [1, 1, 5, '400,840 410,800 385,760'],
  [2, 1, 5, '300,0 335,10 345,40 330,150'], [2, 1, 5, '290,0 275,50 285,130 250,160'], [2, 1, 9, '0,270 50,250 230,240 290,225 320,200'], [2, 1, 5, '0,300 60,312 130,295'], [2, 1, 5, '245,190 255,290 265,335 200,345'], [2, 1, 6, '260,340 310,375 350,385 375,410 400,405 410,425'],
  [2, 1, 5, '550,0 530,50 590,85 470,165'], [2, 1, 5, '630,0 590,90 580,170 605,230 600,280'], [2, 1, 5, '590,85 740,20'], [2, 1, 5, '690,60 730,120 740,210 860,185 880,100'], [2, 1, 6, '415,210 430,270 490,300 550,300 640,265 750,240 735,210'],
  [2, 1, 9, '0,485 120,522 150,578 105,630 115,750 165,815 100,930'], [2, 1, 5, '165,820 260,890 245,940'], [2, 1, 5, '100,920 100,865 140,860'], [2, 1, 10, '520,470 580,507 650,508 710,520 740,498 810,500 850,550 890,560'], [2, 1, 5, '715,515 760,540 765,680 790,705 870,705 900,710 890,650'], [2, 1, 5, '870,705 890,760 915,770 970,822 1010,825 1080,850'],
  [2, 1, 10, '340,962 460,948 510,960 560,990 690,985'], [2, 1, 8, '435,955 430,1020 390,1030 225,1030 210,1150'], [2, 1, 6, '210,980 225,1030 265,1080 275,1150'], [2, 1, 12, '158,1038 215,1150'], [2, 1, 5, '230,975 300,985 340,1010 345,970'], [2, 1, 5, '340,1010 350,1060 390,1110 400,1150'], [2, 1, 5, '60,935 30,900 40,870'], [2, 1, 5, '870,1060 920,1060 970,1090 1080,1110'], [2, 1, 5, '1010,1105 1030,1150'],
];

/* Numbered routes, as [casing width, points], over the whole sheet. */
const ROUTES = [
  [18, '540,320 540,240 610,160 650,105 690,90 790,150 810,125'],
  [19, '520,335 460,370 430,410 412,500 405,590 385,650 370,715 385,750 440,805 500,875 570,945 655,1000 750,995 850,1035 960,1070 1060,1105 1200,1105 1230,1115 1275,1145'],
  [19, '1240,915 1260,940 1290,955'],
  [19, '1355,985 1385,1035 1500,1080 1520,1120 1600,1190 1625,1250 1665,1430 1705,1515'],
  [18, '1625,1245 1680,1275 1770,1305 1840,1335 1860,1360 1845,1390 1870,1405 1920,1395'],
  [18, '1485,1670 1460,1710 1400,1750 1335,1755 1290,1800 1255,1920 1290,2010 1260,2080 1220,2130 1140,2170 1080,2205 1040,2290'],
  [28, '1560,1575 1480,1660'],
  [25, '1715,1550 1735,1630 1770,1790 1795,1910'],
  [27, '845,478 825,530 930,550 990,555 1050,538 1100,560 1160,562 1210,590 1250,590 1295,568 1400,555 1450,555'],
  [30, '1580,0 1530,50 1475,80 1440,120 1417,195 1432,270 1435,350 1475,405 1472,480 1455,530 1455,545 1510,640 1530,730 1560,800 1560,890'],
  [30, '1452,885 1510,895 1680,882 1820,895 1850,880 1835,820 1900,755 1970,740 2010,740'],
  [34, '310,0 325,120 340,170 380,230 430,270 505,315 560,320 660,340 780,400 850,448 880,448 905,410 930,345 980,315 1040,295'],
  [34, '740,0 760,60 790,100 830,130 920,190 960,235 1040,295 1140,390 1245,510 1285,570 1325,640 1355,730 1410,810 1452,870 1452,890 1390,935 1360,975 1330,980 1275,963 1265,990 1275,1060 1270,1155 1190,1230 1190,1265 1255,1390 1320,1445 1330,1470 1380,1525 1450,1545 1720,1540 1760,1530 1860,1475 1900,1445 1920,1400 1980,1393 2020,1372 2080,1368 2130,1354 2195,1359 2340,1318 2410,1307 2460,1312 2515,1330 2560,1328 2590,1335 2700,1320 2780,1312 2870,1295 2930,1250 3000,1215 3030,1185 3090,1160 3150,1165 3240,1215'],
  [32, '2280,1355 2300,1430 2325,1470 2470,1575 2630,1582 2675,1602'],
  [31, '1795,1910 1805,1980 1820,2080 1860,2145 1910,2170 1945,2220 1955,2310'],
  [31, '1802,1955 1910,1955 1960,1935 2020,1950 2080,1910 2160,1950 2220,2010 2235,2070 2300,2140 2325,2140 2425,2075 2455,2075 2500,2100'],
  [34, '20,2300 95,2240 190,2210 230,2190 250,2125 330,2070 390,2028 450,2033 490,2025 520,2005 560,1940 650,1880 680,1840 695,1790 715,1750 755,1705 830,1670 930,1630 970,1620 1125,1627 1180,1605 1230,1550 1290,1520 1330,1470'],
];

const FERRIES = [
  '1860,912 1960,900 2010,925 2100,1000 2160,1040 2280,1065 2430,1060 2500,1015 2790,800 2840,700 2960,575 3010,560 3240,592',
  '1940,970 1945,940 1990,930 2080,1010 2170,1065 2310,1090 2430,1080 2530,1010 2790,810 2930,735 3060,695 3150,682 3240,688',
  '2000,905 2110,1010 2200,1050 2420,1068 2700,865 2780,800 2820,725 2950,590 3240,600',
  '2790,800 2930,740 3070,700 3240,696',
  '1790,1290 1810,1280 2165,1260 2320,1180 2440,1075 2800,810',
];

const LABELS = [
  [-1, 832, 154, 'akobsberg'], [112, 986, 113, 'Solhem'], [377, 1043, 84, 'Solna'], [641, 1066, 110, 'Lidingö'],
  [991, 908, 89, 'Vaxho'], [40, 1200, 91, 'Lovön'], [969, 1198, 122, 'Orminge'], [393, 1314, 151, 'Arstaskog'],
  [326, 1379, 151, 'Västberga'], [928, 1397, 153, 'Saltsjöbad'], [920, 1539, 100, 'Tyresö'], [294, 1563, 143, 'Huddinge'],
];

const SHIELDS = [
  [162, 853, 54, '#3b78c9', '275'], [379, 925, 40, '#6b9f43', 'E4'], [492, 1066, 40, '#6b9f43', 'E4'],
  [392, 1397, 54, '#3b78c9', '226'], [583, 1464, 40, '#3b78c9', '73'],
];

function StockholmMap() {
  return (
    <MapSvg viewBox="0 804 1080 760" role="img" aria-label="Map of Stockholm">
      <g transform="translate(0 800) scale(0.333333)">
        {SHEETS.map((s) => (
          <svg key={`${s.x}-${s.y}`} x={s.x} y={s.y} width="1080" height="1160" viewBox="0 0 1080 1160">
            <rect width="1080" height="1160" fill={s.base} />
            {s.shapes.map(([fill, points], i) => <polygon key={i} fill={fill} points={points} />)}
          </svg>
        ))}
        <g fill="none" stroke="#689ff8" strokeWidth="6" strokeDasharray="48 20">
          {FERRIES.map((p) => <polyline key={p} points={p} />)}
        </g>
        <g fill="none" stroke="#fff" strokeLinejoin="round" strokeLinecap="round">
          {STREETS.map(([c, r, w, p], i) => (
            <polyline key={i} points={p} strokeWidth={w + 1.2} transform={`translate(${c * 1080} ${r * 1140})`} />
          ))}
        </g>
        <g fill="none" strokeLinejoin="round" strokeLinecap="round">
          {ROUTES.map(([w, p]) => <polyline key={p} points={p} stroke="#ffa90a" strokeWidth={w} />)}
          {ROUTES.map(([w, p]) => <polyline key={p} points={p} stroke="#ffebc1" strokeWidth={w > 24 ? w - 13 : w - 8} />)}
        </g>
      </g>
      {LABELS.map(([x, y, w, t]) => (
        <MapLabel key={t} x={x} y={y} textLength={w} lengthAdjust="spacingAndGlyphs">{t}</MapLabel>
      ))}
      <MapLabel $size={59} x="409" y="1207" textLength="258" lengthAdjust="spacingAndGlyphs">Stockholm</MapLabel>
      {SHIELDS.map(([x, y, w, fill, t]) => (
        <g key={`${x}-${t}`}>
          <rect x={x} y={y} width={w} height="44" fill={fill} />
          <ShieldText x={x + w / 2} y={y + 31.5} textLength={t.length * 14.3} lengthAdjust="spacingAndGlyphs">{t}</ShieldText>
        </g>
      ))}
      <path d="M537.500 1180C536 1165 532 1154 521 1140C511 1126 505 1117 505 1103A35 35 0 0 1 575 1103C575 1117 569 1126 559 1140C548 1154 544 1165 542.500 1180Z" fill="#ea4335" stroke="#fff" strokeWidth="2" />
      <circle cx="540" cy="1103" r="12.3" fill="#811411" />
      <MapLabel x="19" y="1524" textLength="128" lengthAdjust="spacingAndGlyphs" opacity="0.5">Botkyrka</MapLabel>
      <g fill="none" stroke="#fff" strokeOpacity="0.4" strokeLinecap="round" strokeWidth="46">
        <path d="M38 1513L69 1518H156" />
      </g>
      <GoogleText y="1530.500">
        <tspan x="17.500" fill="#4285f4">G</tspan><tspan x="55" fill="#ea4335">o</tspan><tspan x="81.500" fill="#fbbc05">o</tspan><tspan x="108.500" fill="#4285f4">g</tspan><tspan x="133" fill="#34a853">l</tspan><tspan x="143" fill="#ea4335">e</tspan>
      </GoogleText>
    </MapSvg>
  );
}

export default function App() {
  return (
    <>
      <GlobalStyle />
      <Screen>
        <StatusBar />
        <Header>
          <CloseButton aria-label="Close">
            <svg width="89" height="89" viewBox="0 0 89 89">
              <path d="M31 28.500L59.500 58.500M59.500 28.500L31 58.500" stroke="#fff" strokeWidth="9" strokeLinecap="round" />
            </svg>
          </CloseButton>
        </Header>
        <AlertCard>
          <Text as="h1" $size={54.9} $line={64}>Alert Raised</Text>
          <Text $top={52}>Your location was successfully shared to your<br />Emergency contacts.</Text>
          <StatusRow>
            <Text as="span">Test</Text>
            <Text as="span">Sending</Text>
          </StatusRow>
        </AlertCard>
        <StockholmMap />
        <LocationPanel>
          <Text as="h2" $size={50.1} $line={58} $color="#000">Your Location:</Text>
          <Text $top={30} $color="#808080">The location of your incident is displayed here for your<br />reference.</Text>
          <Text $top={30} $size={50.2} $line={58} $color="#e93323">///bolt.lime.metro</Text>
          <Text $top={30} $size={39.1} $color="#808080">Latitude: 59.329439 Longitude: 18.068309</Text>
          <PoweredRow>
            <Text $top={8} $color="#000">Powered by</Text>
            <svg width="344" height="60" viewBox="0 0 344 60" role="img" aria-label="what3words">
              <rect x="2" y="2" width="53.500" height="53.500" fill="none" stroke="#e8212b" strokeWidth="4" />
              <path d="M14 40L21.500 17.500M25 40L32.500 17.500M36 40L43.500 17.500" stroke="#e8212b" strokeWidth="4" strokeLinecap="round" />
              <BrandText x="66" y="41" textLength="274" lengthAdjust="spacing">what3words</BrandText>
            </svg>
          </PoweredRow>
        </LocationPanel>
        <NavBar>
          <svg width="41" height="46" viewBox="0 0 41 46">
            <path d="M3 23L37 3V43Z" fill="#999" stroke="#999" strokeWidth="5" strokeLinejoin="round" />
          </svg>
          <svg width="42" height="41" viewBox="0 0 42 41"><circle cx="22" cy="20.500" r="20" fill="#999" /></svg>
          <svg width="41" height="41" viewBox="0 0 41 41"><rect width="41" height="41" rx="4" fill="#999" /></svg>
        </NavBar>
      </Screen>
    </>
  );
}
